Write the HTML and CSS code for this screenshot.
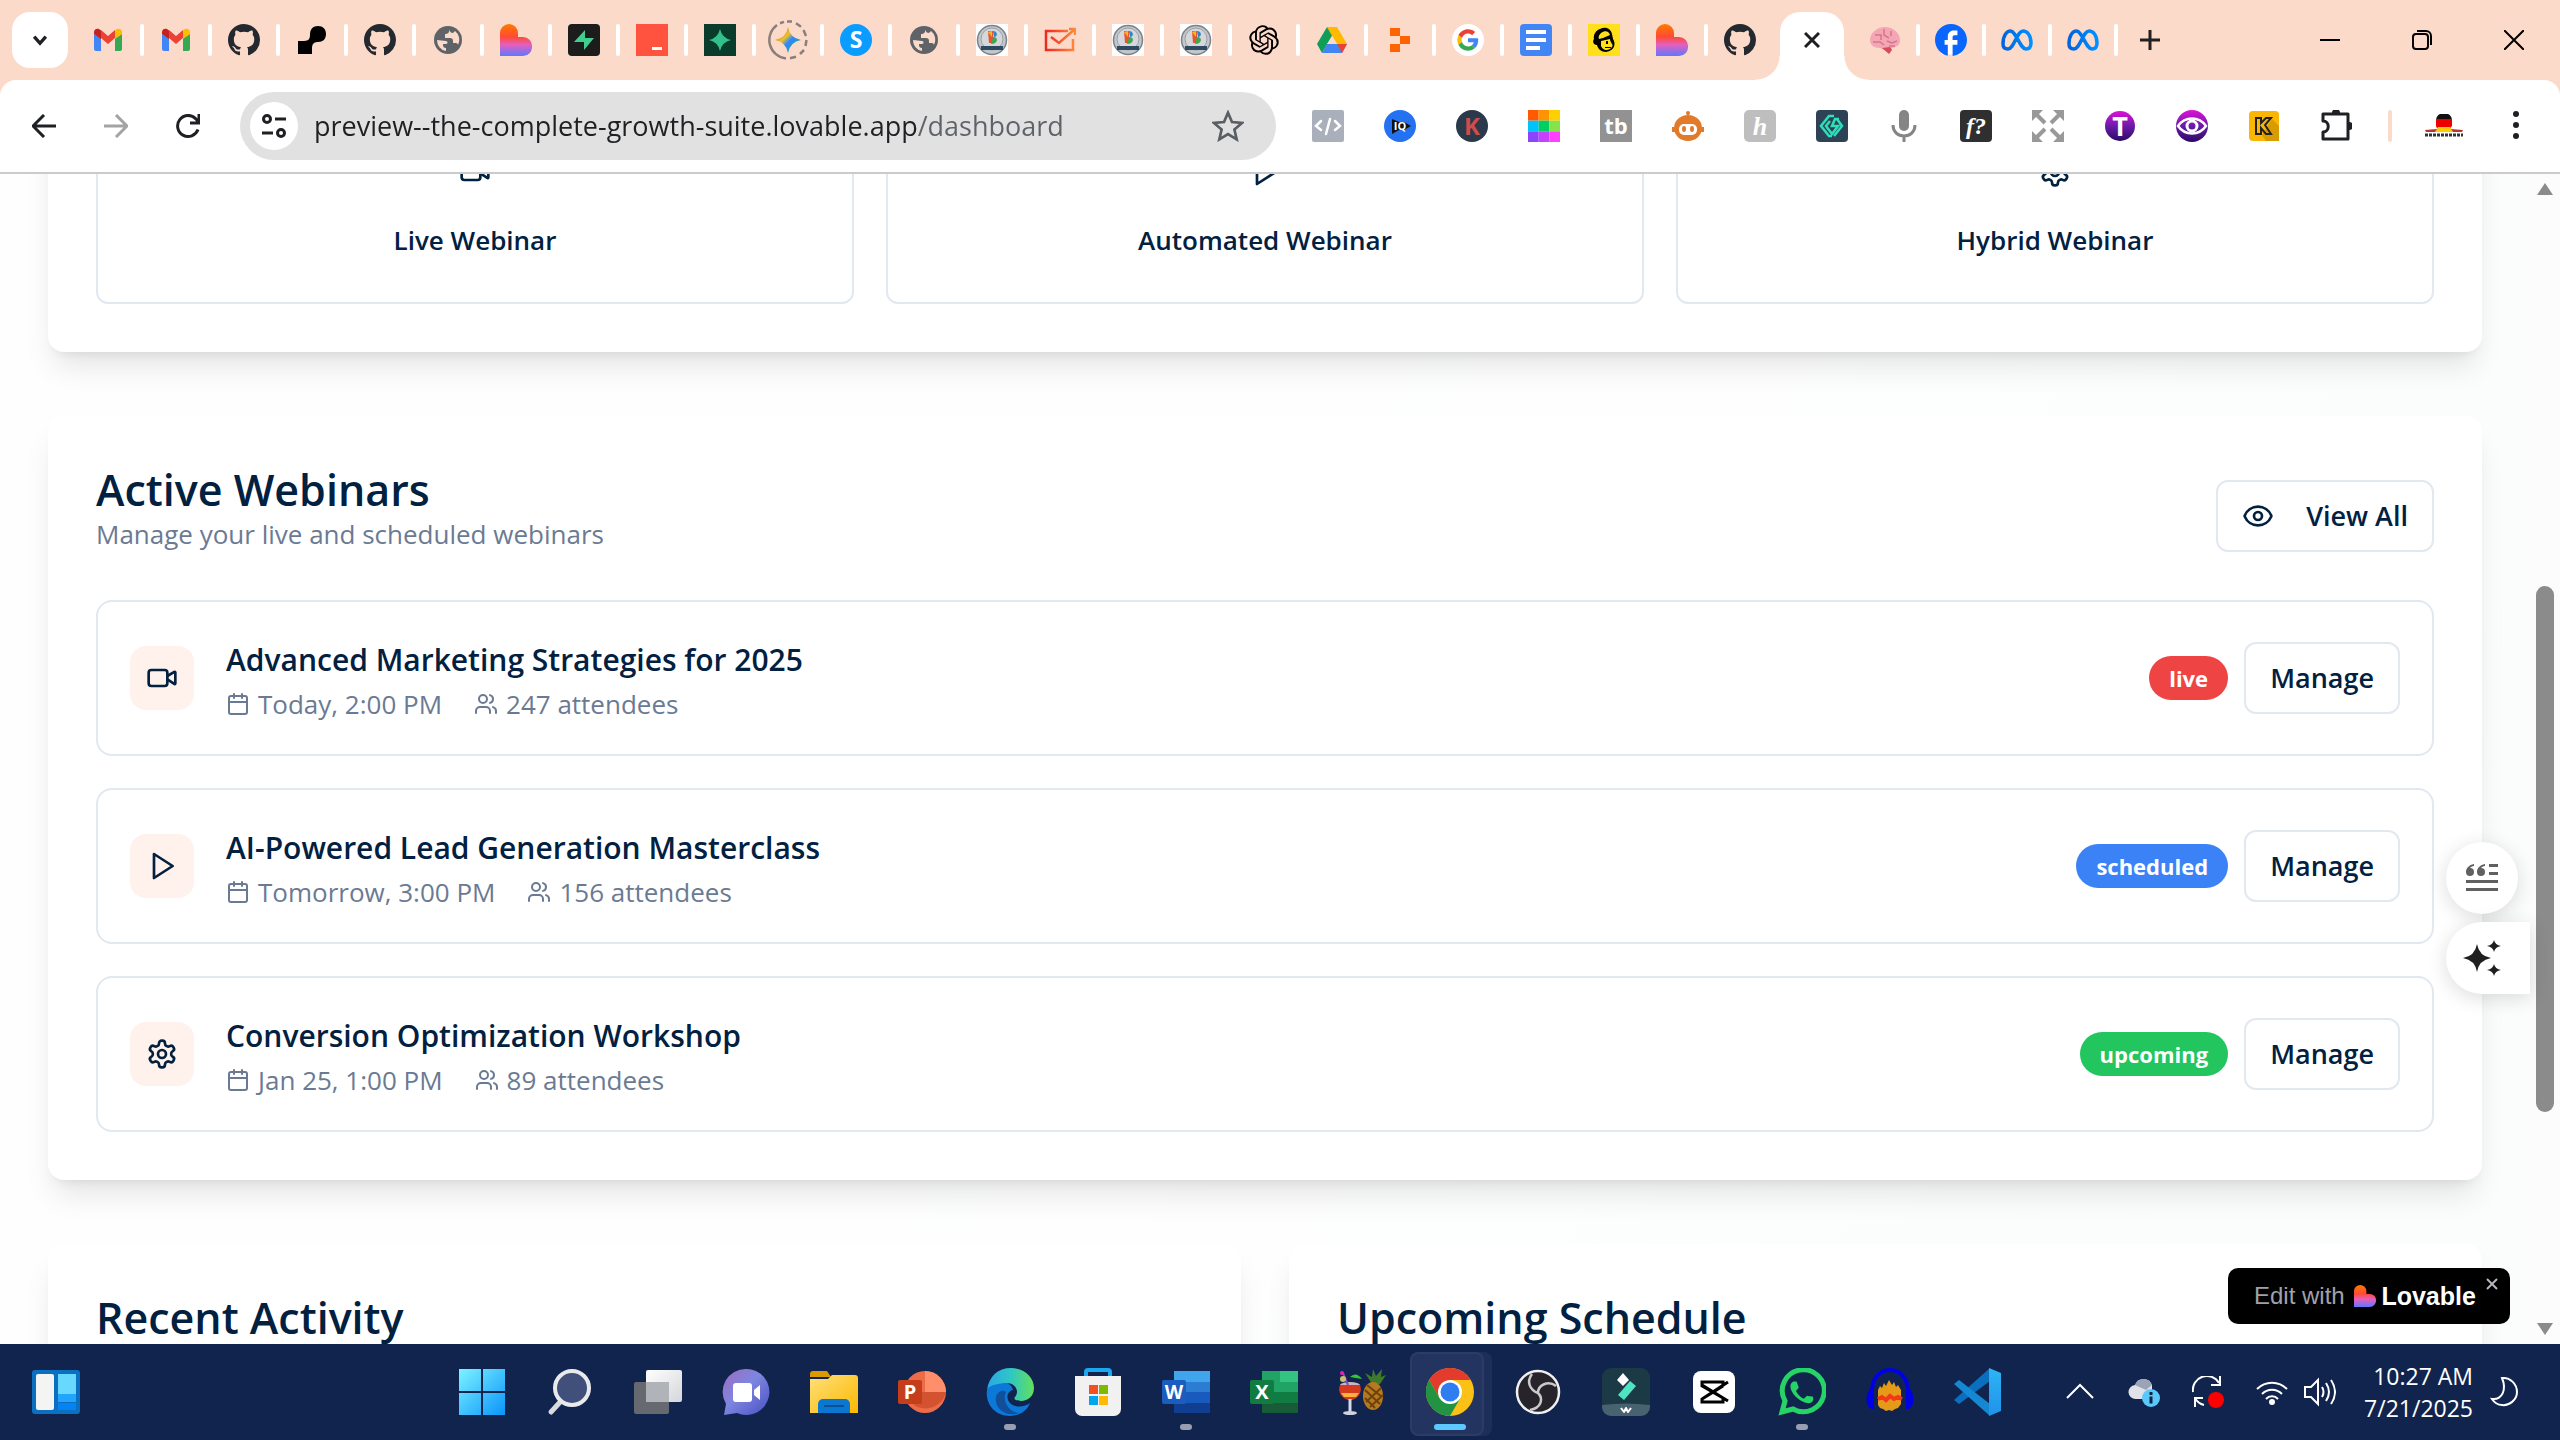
FILE: index.html
```html
<!DOCTYPE html>
<html lang="en">
<head>
<meta charset="utf-8">
<title>Dashboard</title>
<link rel="stylesheet" href="styles.css">
</head>
<body>
<svg class="defs" aria-hidden="true">
  <defs>
    <linearGradient id="g-heart" x1="0" y1="0" x2="0" y2="1"><stop offset="0" stop-color="#ff7a00"/><stop offset=".4" stop-color="#ff4a33"/><stop offset=".65" stop-color="#e45fc0"/><stop offset="1" stop-color="#5b78ff"/></linearGradient>
    <linearGradient id="g-spark" x1="0" y1="0" x2="1" y2="1"><stop offset="0" stop-color="#ff4641"/><stop offset=".4" stop-color="#e8c32a"/><stop offset=".55" stop-color="#3186ff"/><stop offset="1" stop-color="#0ebc5f"/></linearGradient>
    <linearGradient id="g-task" x1="0" y1="0" x2="1" y2="0"><stop offset="0" stop-color="#f0281e"/><stop offset="1" stop-color="#ff8a3c"/></linearGradient>
    <linearGradient id="g-violet" x1="0" y1="0" x2="0" y2="1"><stop offset="0" stop-color="#e010d8"/><stop offset=".5" stop-color="#6a1ca8"/><stop offset="1" stop-color="#2b0a66"/></linearGradient>
    <linearGradient id="g-meta" x1="0" y1="0" x2="1" y2="0"><stop offset="0" stop-color="#0064e0"/><stop offset="1" stop-color="#0090ff"/></linearGradient>
    <linearGradient id="g-win" x1="0" y1="0" x2="1" y2="1"><stop offset="0" stop-color="#7df3ff"/><stop offset="1" stop-color="#0a94fb"/></linearGradient>
    <linearGradient id="g-grey" x1="0" y1="0" x2="1" y2="1"><stop offset="0" stop-color="#ffffff"/><stop offset="1" stop-color="#d4d6da"/></linearGradient>
    <linearGradient id="g-chat" x1="0" y1="0" x2="1" y2="1"><stop offset="0" stop-color="#9c6bc0"/><stop offset=".45" stop-color="#7e86e0"/><stop offset="1" stop-color="#4a4fc4"/></linearGradient>
    <linearGradient id="g-folder" x1="0" y1="0" x2="1" y2="1"><stop offset="0" stop-color="#ffe07a"/><stop offset="1" stop-color="#fbb800"/></linearGradient>
    <linearGradient id="g-edge" x1="0" y1="0" x2="1" y2="0"><stop offset="0" stop-color="#2aa6e8"/><stop offset=".5" stop-color="#2fc6c4"/><stop offset="1" stop-color="#62e05c"/></linearGradient>
    <linearGradient id="g-code" x1="0" y1="0" x2="0" y2="1"><stop offset="0" stop-color="#2fb4f5"/><stop offset="1" stop-color="#1f92ea"/></linearGradient>

    <symbol id="gmail" viewBox="0 0 32 32"><path fill="#4285f4" d="M2 10v15a2 2 0 0 0 2 2h5V14z"/><path fill="#34a853" d="M30 10v15a2 2 0 0 1-2 2h-5V14z"/><path fill="#ea4335" d="M9 14V6l7 6 7-6v8l-7 6z"/><path fill="#c5221f" d="M2 10V8c0-3 3-4 5-3l2 1.500V15z"/><path fill="#fbbc04" d="M30 10V8c0-3-3-4-5-3l-2 1.500V15z"/></symbol>
    <symbol id="github" viewBox="0 0 16 16"><path fill="#24292f" d="M8 0C3.580 0 0 3.580 0 8c0 3.540 2.290 6.530 5.470 7.590.4.070.55-.17.55-.38 0-.19-.01-.82-.01-1.490-2.010.37-2.530-.49-2.690-.94-.09-.23-.48-.94-.82-1.130-.28-.15-.68-.52-.01-.53.63-.01 1.080.58 1.230.82.72 1.210 1.870.87 2.330.66.070-.52.28-.87.51-1.070-1.780-.2-3.640-.89-3.640-3.950 0-.87.31-1.590.82-2.150-.08-.2-.36-1.020.080-2.120 0 0 .67-.21 2.200.82.64-.18 1.320-.27 2-.27.68 0 1.360.090 2 .27 1.530-1.040 2.200-.82 2.200-.82.44 1.100.16 1.920.080 2.120.51.56.82 1.270.82 2.150 0 3.070-1.870 3.750-3.650 3.950.29.25.54.73.54 1.480 0 1.070-.01 1.930-.01 2.200 0 .21.15.46.55.38A8.010 8.010 0 0 0 16 8c0-4.420-3.580-8-8-8z"/></symbol>
    <symbol id="globe" viewBox="0 0 32 32"><circle cx="16" cy="16" r="14" fill="#5f6368"/><path fill="#fcdac9" d="M17 5c1 3-1 5-4 5v4h5c2 0 3 1 3 3v2h3c1 0 2 1 2 2a11 11 0 0 0-3-14l-2 2c-2 0-3-1-4-4zM5 16a11 11 0 0 0 9 11v-3c-2 0-3-1-3-3v-1h3c2 0 2-3 0-3z"/></symbol>
    <symbol id="heart" viewBox="0 0 32 32"><path fill="url(#g-heart)" d="M0 9a9 9 0 0 1 18 0v4h5a9 9 0 0 1 9 9.500 9 9 0 0 1-9 9.500H0z"/></symbol>
    <symbol id="badge-b" viewBox="0 0 32 32"><path fill="#fff" d="M0 0h32v32H0z"/><circle cx="16" cy="16" r="14.500" fill="#c3c7cb" stroke="#7b8289" stroke-width="1.500"/><circle cx="16" cy="15" r="11" fill="#d5d7da" stroke="#9aa0a6"/><path fill="#e9542f" d="M12 7h5v12h-4z"/><path fill="#2a86c9" d="M17 7c5 0 5 6 1 6z"/><path fill="#42a552" d="M17 13c6 0 5 7-2 7z"/><path fill="#f3b52b" d="M12 8l4-1v6z"/><path fill="#2c4a62" d="M5 22h22v4H5z"/></symbol>
    <symbol id="meta" viewBox="0 0 32 32"><path fill="none" stroke="url(#g-meta)" stroke-width="3.500" d="M2 20C2 11 6 7 9.500 7 15 7 19 25 25 25c3.500 0 5-2.500 5-6 0-8-4-12-8-12-6 0-9 18-15 18-3.500 0-5-2-5-5z"/></symbol>

    <symbol id="video" viewBox="0 0 24 24"><path d="m16 13 5.220 3.480a.5.5 0 0 0 .78-.42V7.870a.5.5 0 0 0-.75-.43L16 10.500"/><rect x="2" y="6" width="14" height="12" rx="2"/></symbol>
    <symbol id="play" viewBox="0 0 24 24"><path d="M6 3l14 9-14 9z"/></symbol>
    <symbol id="settings" viewBox="0 0 24 24"><path d="M12.220 2h-.44a2 2 0 0 0-2 2v.18a2 2 0 0 1-1 1.730l-.43.25a2 2 0 0 1-2 0l-.15-.08a2 2 0 0 0-2.730.73l-.22.38a2 2 0 0 0 .73 2.730l.15.1a2 2 0 0 1 1 1.720v.51a2 2 0 0 1-1 1.740l-.15.09a2 2 0 0 0-.73 2.730l.22.38a2 2 0 0 0 2.730.73l.15-.08a2 2 0 0 1 2 0l.43.25a2 2 0 0 1 1 1.730V20a2 2 0 0 0 2 2h.44a2 2 0 0 0 2-2v-.18a2 2 0 0 1 1-1.730l.43-.25a2 2 0 0 1 2 0l.15.08a2 2 0 0 0 2.730-.73l.22-.39a2 2 0 0 0-.73-2.730l-.15-.08a2 2 0 0 1-1-1.740v-.5a2 2 0 0 1 1-1.740l.15-.09a2 2 0 0 0 .73-2.730l-.22-.38a2 2 0 0 0-2.730-.73l-.15.08a2 2 0 0 1-2 0l-.43-.25a2 2 0 0 1-1-1.730V4a2 2 0 0 0-2-2z"/><circle cx="12" cy="12" r="3"/></symbol>
    <symbol id="eye" viewBox="0 0 24 24"><path d="M2.060 12.350a1 1 0 0 1 0-.7 10.750 10.750 0 0 1 19.880 0 1 1 0 0 1 0 .7 10.750 10.750 0 0 1-19.880 0"/><circle cx="12" cy="12" r="3"/></symbol>
    <symbol id="calendar" viewBox="0 0 24 24"><path d="M8 2v4M16 2v4M3 10h18"/><rect x="3" y="4" width="18" height="18" rx="2"/></symbol>
    <symbol id="users" viewBox="0 0 24 24"><path d="M16 21v-2a4 4 0 0 0-4-4H6a4 4 0 0 0-4 4v2M22 21v-2a4 4 0 0 0-3-3.870M16 3.130a4 4 0 0 1 0 7.750"/><circle cx="9" cy="7" r="4"/></symbol>
  </defs>
</svg>

<header class="browser">
  <div class="tabstrip">
    <button class="tab-search" aria-label="Search tabs"><svg viewBox="0 0 24 24"><path d="M5 8l7 8 7-8"/></svg></button>
    <div class="tabs">
      <span class="tab"><svg><use href="#gmail"/></svg></span>
      <span class="tab"><svg><use href="#gmail"/></svg></span>
      <span class="tab"><svg><use href="#github"/></svg></span>
      <span class="tab"><svg viewBox="0 0 32 32"><path d="M2 30V17h6c5 0 6-3 6-6 0-6 3-9 8-9s8 3 8 8-3 8-8 8c-4 0-6 2-6 6v6z"/></svg></span>
      <span class="tab"><svg><use href="#github"/></svg></span>
      <span class="tab"><svg><use href="#globe"/></svg></span>
      <span class="tab"><svg><use href="#heart"/></svg></span>
      <span class="tab"><svg viewBox="0 0 32 32"><rect width="32" height="32" rx="4" fill="#1c1c1c"/><path fill="#3ecf8e" d="M17 6v8h9L16 26v-8H6z"/></svg></span>
      <span class="tab"><svg viewBox="0 0 32 32"><path fill="#ff523f" d="M0 0h32v32H0z"/><path fill="#fff" d="M16 23h10v3H16z"/></svg></span>
      <span class="tab"><svg viewBox="0 0 32 32"><path fill="#093c2b" d="M0 0h32v32H0z"/><path fill="#34c08b" d="M16 5q2 9 11 11-9 2-11 11-2-9-11-11 9-2 11-11z"/></svg></span>
      <span class="tab tab-loading"><svg viewBox="0 0 40 40"><path fill="none" stroke="#8b7f7b" stroke-width="2.500" d="M18 38.400A18.500 18.500 0 0 1 9 5M12 3.300l4-1.400M19 1.500h5M28 3.300l5 3.500M35.500 10l2.500 6M38.500 20l-1 6M36 30l-4 4M28 36.700l-6 1.600"/><path fill="url(#g-spark)" d="M20 7q2 11 13 13-11 2-13 13-2-11-13-13 11-2 13-13z"/></svg></span>
      <span class="tab"><svg viewBox="0 0 32 32"><circle cx="16" cy="16" r="16" fill="#0a9dff"/><text x="16" y="24" class="t-icon t-white" font-size="23">S</text></svg></span>
      <span class="tab"><svg><use href="#globe"/></svg></span>
      <span class="tab"><svg><use href="#badge-b"/></svg></span>
      <span class="tab"><svg viewBox="0 0 32 32" fill="none" stroke="url(#g-task)" stroke-width="2.500"><path d="M24 7H2v19h27V15M7 13l8 6L31 5M25 5h6v6"/></svg></span>
      <span class="tab"><svg><use href="#badge-b"/></svg></span>
      <span class="tab"><svg><use href="#badge-b"/></svg></span>
      <span class="tab"><svg viewBox="-1 -1 26 26"><path d="M22.280 9.820a5.980 5.980 0 0 0-.52-4.910 6.050 6.050 0 0 0-6.500-2.900A6.070 6.070 0 0 0 4.980 4.180a5.980 5.980 0 0 0-4 2.900 6.050 6.050 0 0 0 .74 7.100 5.980 5.980 0 0 0 .51 4.910 6.050 6.050 0 0 0 6.520 2.900A5.980 5.980 0 0 0 13.260 24a6.060 6.060 0 0 0 5.770-4.210 5.990 5.990 0 0 0 4-2.900 6.060 6.060 0 0 0-.75-7.070zM13.260 22.430a4.480 4.480 0 0 1-2.880-1.040l.14-.08 4.780-2.760a.8.8 0 0 0 .39-.68v-6.740l2.020 1.170a.07.07 0 0 1 .04.05v5.580a4.500 4.500 0 0 1-4.490 4.500zM3.600 18.300a4.470 4.470 0 0 1-.54-3.010l.14.09 4.790 2.750a.77.77 0 0 0 .78 0l5.840-3.360v2.330a.08.08 0 0 1-.03.06L9.740 19.950A4.500 4.500 0 0 1 3.600 18.300zM2.340 7.900A4.490 4.490 0 0 1 4.710 5.920V11.600a.77.77 0 0 0 .38.680l5.820 3.350-2.020 1.170a.08.08 0 0 1-.07 0L3.990 14.010A4.500 4.500 0 0 1 2.340 7.870zM18.940 11.750L13.100 8.360 15.120 7.200a.08.08 0 0 1 .07 0l4.830 2.790a4.490 4.490 0 0 1-.68 8.100v-5.670a.79.79 0 0 0-.4-.67zM20.950 8.730l-.14-.09-4.780-2.780a.78.78 0 0 0-.78 0L9.410 9.230V6.900a.07.07 0 0 1 .03-.06l4.830-2.790a4.500 4.500 0 0 1 6.680 4.660zM8.310 12.860L6.290 11.700a.08.08 0 0 1-.04-.06V6.070a4.500 4.500 0 0 1 7.370-3.450l-.14.08L8.700 5.460a.8.8 0 0 0-.39.680zM9.400 10.500l2.610-1.500 2.600 1.500v3l-2.600 1.500-2.600-1.500z" fill-rule="evenodd"/></svg></span>
      <span class="tab"><svg viewBox="0 0 32 32"><path fill="#0f9d58" d="M11 3l5 9-10 17-5-9z"/><path fill="#188038" d="M11 3h10l-5 9z"/><path fill="#ffba00" d="M11 3h10l10 17H21z"/><path fill="#4285f4" d="M6 29l5-9h20l-5 9z"/><path fill="#ea4335" d="M21 20h10l-5 9z"/><path fill="#fcdac9" d="M16 12l5 8H11z"/></svg></span>
      <span class="tab"><svg viewBox="0 0 32 32" fill="#ff6200"><path d="M6 4h10v8H6zM16 12h10v8H16zM6 20h10v8H6z"/></svg></span>
      <span class="tab"><svg viewBox="-12 -12 72 72"><circle cx="24" cy="24" r="36" fill="#fff"/><path fill="#ea4335" d="M24 9.500c3.540 0 6.710 1.220 9.210 3.600l6.850-6.850C35.900 2.380 30.470 0 24 0 14.620 0 6.510 5.380 2.560 13.220l7.980 6.190C12.430 13.720 17.740 9.500 24 9.500z"/><path fill="#4285f4" d="M46.980 24.550c0-1.570-.15-3.090-.38-4.550H24v9.020h12.940c-.58 2.960-2.260 5.480-4.780 7.180l7.730 6c4.510-4.180 7.090-10.360 7.090-17.650z"/><path fill="#fbbc05" d="M10.530 28.590c-.48-1.450-.76-2.990-.76-4.590s.27-3.140.76-4.590l-7.980-6.190C.92 16.460 0 20.120 0 24c0 3.880.92 7.540 2.560 10.780z"/><path fill="#34a853" d="M24 48c6.480 0 11.930-2.130 15.890-5.810l-7.730-6c-2.150 1.450-4.920 2.300-8.160 2.300-6.260 0-11.570-4.220-13.470-9.910l-7.980 6.190C6.510 42.620 14.620 48 24 48z"/></svg></span>
      <span class="tab"><svg viewBox="0 0 32 32"><rect width="32" height="32" rx="4" fill="#4285f4"/><path fill="#fff" d="M6 6h20v4H6zM6 14h20v4H6zM6 22h14v4H6z"/></svg></span>
      <span class="tab"><svg viewBox="0 0 32 32"><path fill="#ffe01b" d="M0 0h32v32H0z"/><path d="M12 5c6-3 11 0 12 5l1 5c3 4 2 12-7 13-5 0-8-3-9-7-3 0-5-3-3-6-1-4 2-9 6-10z"/><path fill="#ffe01b" d="M13 9c4-3 8-2 9 2l-7 3-4 1c-1-2 0-4 2-6zM13 17l9-2c0 4 4 5 2 8-3 4-9 4-11-1z"/><path d="M18 17h2v3h-2zM17 23h6v1h-6z"/></svg></span>
      <span class="tab"><svg><use href="#heart"/></svg></span>
      <span class="tab"><svg><use href="#github"/></svg></span>
    </div>
    <button class="tab-active" aria-label="Close tab"><svg viewBox="0 0 16 16"><path d="M1 1l14 14M15 1L1 15"/></svg></button>
    <div class="tabs tabs-after">
      <span class="tab"><svg viewBox="0 0 32 32"><path fill="#f4a6b4" d="M16 3c8 0 15 6 15 13 0 5-3 7-8 8l-2 5-5-3-5-2C5 24 1 21 1 16 1 9 8 3 16 3z"/><path fill="none" stroke="#d9748a" stroke-width="1.500" d="M6 11h6v5M15 5v6l5 3M22 7v5M4 18h7l4 3M18 17l5 2 5-2M20 22h6"/><path fill="#d94a5e" d="M13 24l8-1 2 3-3 4z"/></svg></span>
      <span class="tab"><svg viewBox="2 2 20 20"><path fill="#fff" d="M6 5h12v16H6z"/><path fill="#0866ff" d="M22 12c0-5.520-4.480-10-10-10S2 6.480 2 12c0 4.840 3.440 8.870 8 9.800V15H8v-3h2V9.500C10 7.570 11.570 6 13.500 6H16v3h-2c-.55 0-1 .45-1 1v2h3v3h-3v6.950c5.050-.5 9-4.760 9-9.950z"/></svg></span>
      <span class="tab"><svg><use href="#meta"/></svg></span>
      <span class="tab"><svg><use href="#meta"/></svg></span>
    </div>
    <button class="tab-new" aria-label="New tab"><svg viewBox="0 0 20 20"><path d="M10 0v20M0 10h20"/></svg></button>
    <div class="window-controls">
      <button aria-label="Minimize"><svg viewBox="0 0 20 20"><path d="M0 10h20"/></svg></button>
      <button aria-label="Restore"><svg viewBox="0 0 20 20"><rect x="1" y="4" width="15" height="15" rx="3"/><path d="M5 1h9a5 5 0 0 1 5 5v9"/></svg></button>
      <button aria-label="Close"><svg viewBox="0 0 20 20"><path d="M0 0l20 20M20 0L0 20"/></svg></button>
    </div>
  </div>

  <div class="toolbar">
    <div class="nav-buttons">
      <button aria-label="Back"><svg viewBox="0 0 24 24"><path d="M24 12H2M12 1L1 12l11 11"/></svg></button>
      <button aria-label="Forward" disabled><svg viewBox="0 0 24 24"><path d="M0 12h22M12 1l11 11-11 11"/></svg></button>
      <button aria-label="Reload"><svg viewBox="0 0 24 24"><path d="M22 15.500A10.500 10.500 0 1 1 20 5l2.500 3.500M23 0v9h-9"/></svg></button>
    </div>
    <div class="omnibox">
      <button class="site-info" aria-label="Site information"><svg viewBox="0 0 24 24"><circle cx="5" cy="5" r="3.500"/><path d="M13 5h11M0 19h11"/><circle cx="19" cy="19" r="3.500"/></svg></button>
      <input class="url" type="text" aria-label="Address" value="preview--the-complete-growth-suite.lovable.app/dashboard">
      <button class="star" aria-label="Bookmark"><svg viewBox="0 0 24 24"><path d="M12 2l3 7 7.500.7-5.700 5 1.700 7.300L12 18l-6.500 4 1.700-7.300-5.700-5L9 9z"/></svg></button>
    </div>
    <div class="extensions">
      <span class="ext"><svg viewBox="0 0 32 32"><rect width="32" height="32" rx="2" fill="#aab0bb"/><path fill="none" stroke="#fff" stroke-width="2.500" stroke-linecap="round" d="M9 11l-5 5 5 4M23 11l5 5-5 4M18 9l-4 15"/></svg></span>
      <span class="ext"><svg viewBox="0 0 32 32"><circle cx="16" cy="16" r="16" fill="#2472f2"/><path fill="#111" d="M8 9l7 3h5l7 4-7 4h-5l-7 4z"/><text x="16" y="20" class="t-icon t-white" font-size="11">IQ</text></svg></span>
      <span class="ext"><svg viewBox="0 0 32 32"><circle cx="16" cy="16" r="16" fill="#2b3a4a"/><text x="16" y="25" class="t-icon" font-size="24" fill="#d24b4b">K</text></svg></span>
      <span class="ext"><svg viewBox="0 0 33 33"><path fill="#ff5a00" d="M0 0h11v11H0z"/><path fill="#ff9400" d="M11 0h11v11H11z"/><path fill="#ffd000" d="M22 0h11v11H22z"/><path fill="#00c2ff" d="M0 11h11v11H0z"/><path fill="#00cf62" d="M11 11h11v11H11z"/><path fill="#84e34a" d="M22 11h11v11H22z"/><path fill="#8a45ff" d="M0 22h11v11H0z"/><path fill="#c840ff" d="M11 22h11v11H11z"/><path fill="#ff40ff" d="M22 22h11v11H22z"/></svg></span>
      <span class="ext"><svg viewBox="0 0 32 32"><path fill="#929292" d="M0 0h32v32H0z"/><text x="16" y="24" class="t-icon t-white" font-size="22">tb</text></svg></span>
      <span class="ext"><svg viewBox="0 0 32 32"><g fill="#e17b2a"><circle cx="16" cy="3" r="2"/><path d="M15 3h2v6h-2z"/><ellipse cx="16" cy="18" rx="14" ry="13"/><path d="M0 17h4v5H0zM28 17h4v5h-4z"/></g><rect x="7" y="14" width="18" height="11" rx="5" fill="#fff"/><ellipse cx="12" cy="19" rx="2" ry="3" fill="#e17b2a"/><ellipse cx="20" cy="19" rx="2" ry="3" fill="#e17b2a"/></svg></span>
      <span class="ext"><svg viewBox="0 0 32 32"><rect width="32" height="32" rx="5" fill="#bebebe"/><text x="16" y="25" class="t-icon t-white t-script" font-size="26">h</text></svg></span>
      <span class="ext"><svg viewBox="0 0 32 32"><rect width="32" height="32" rx="4" fill="#2d4257"/><g fill="none" stroke="#2de0b8" stroke-width="2.500"><path d="M18 6h-5L5 16l8 10h3M18 26l8-10-5-7M14 11l-4 5 6 8 6-8h-6l3-7h4"/></g></svg></span>
      <span class="ext"><svg viewBox="0 0 32 32"><rect x="11" y="0" width="10" height="21" rx="5" fill="#858585"/><path fill="none" stroke="#858585" stroke-width="3" d="M5 15c0 7 5 11 11 11s11-4 11-11M16 26v6"/></svg></span>
      <span class="ext"><svg viewBox="0 0 32 32"><rect width="32" height="32" rx="4" fill="#2f2f2f"/><text x="16" y="24" class="t-icon t-white t-serif" font-size="24">f?</text></svg></span>
      <span class="ext"><svg viewBox="0 0 32 32"><g fill="#999" stroke="#999" stroke-width="4"><path stroke="none" d="M0 0h11L0 11zM32 0v11L21 0zM0 32V21l11 11zM32 32H21l11-11z"/><path d="M4 4l9 9M28 4l-9 9M4 28l9-9M28 28l-9-9"/></g></svg></span>
      <span class="ext"><svg viewBox="0 0 32 32"><circle cx="16" cy="16" r="15" fill="url(#g-violet)"/><text x="16" y="26" class="t-icon t-white" font-size="27">T</text></svg></span>
      <span class="ext"><svg viewBox="0 0 32 32"><circle cx="16" cy="16" r="16" fill="url(#g-violet)"/><path fill="none" stroke="#fff" stroke-width="2.500" d="M2 16c7-10 21-10 28 0-7 10-21 10-28 0z"/><circle cx="16" cy="16" r="5" fill="none" stroke="#fff" stroke-width="3"/></svg></span>
      <span class="ext"><svg viewBox="0 0 32 32"><rect x="1" y="1" width="30" height="30" rx="4" fill="#fbb604"/><path fill="#d99c00" d="M14 25l10-16 7 7v15H18z"/><path fill="none" stroke="#222" stroke-width="2" d="M8 8h5v5l5-5h5l-6 7 6 9h-5l-5-6v6H8z"/></svg></span>
      <button class="ext" aria-label="Extensions"><svg viewBox="0 0 32 32"><path fill="none" stroke="#1f2023" stroke-width="3" stroke-linejoin="round" d="M3 4h25v25H3v-7c7 0 7-11 0-11z"/><path fill="#1f2023" d="M12 3a4 4 0 0 1 8 0zM29 12a4 4 0 0 1 0 8z"/></svg></button>
      <i class="toolbar-divider"></i>
      <button class="profile" aria-label="Profile"><svg viewBox="0 0 40 24"><path fill="#111" d="M12 6a8 7 0 0 1 16 0z"/><path fill="#e00" d="M12 5h16v7q-2 3-4 3h-8q-4 0-4-4z"/><path fill="#fc0" d="M14 13h12l3 5H11z"/><path fill="#b33" d="M1 16l12-1-2 3H2zM39 16l-12-1 2 3h9z"/><path fill="none" stroke="#333" stroke-width="3" stroke-dasharray="3 1" d="M1 21h38"/></svg></button>
      <button class="menu" aria-label="Menu"><svg viewBox="0 0 8 32"><circle cx="4" cy="4" r="3"/><circle cx="4" cy="15" r="3"/><circle cx="4" cy="26" r="3"/></svg></button>
    </div>
  </div>
</header>

<div class="viewport">
  <main class="page">
    <section class="card types-card">
      <div class="types">
        <button class="type"><svg class="line-icon"><use href="#video"/></svg><span>Live Webinar</span></button>
        <button class="type"><svg class="line-icon"><use href="#play"/></svg><span>Automated Webinar</span></button>
        <button class="type"><svg class="line-icon"><use href="#settings"/></svg><span>Hybrid Webinar</span></button>
      </div>
    </section>

    <section class="card webinars-card">
      <header class="card-header">
        <div>
          <h2>Active Webinars</h2>
          <p>Manage your live and scheduled webinars</p>
        </div>
        <button class="btn btn-icon"><svg class="line-icon"><use href="#eye"/></svg>View All</button>
      </header>
      <ul class="webinars">
        <li class="webinar">
          <span class="webinar-icon"><svg class="line-icon"><use href="#video"/></svg></span>
          <div class="webinar-text">
            <h3>Advanced Marketing Strategies for 2025</h3>
            <p class="meta"><span><svg class="line-icon"><use href="#calendar"/></svg>Today, 2:00 PM</span><span><svg class="line-icon"><use href="#users"/></svg>247 attendees</span></p>
          </div>
          <span class="status status-live">live</span>
          <button class="btn">Manage</button>
        </li>
        <li class="webinar">
          <span class="webinar-icon"><svg class="line-icon"><use href="#play"/></svg></span>
          <div class="webinar-text">
            <h3>AI-Powered Lead Generation Masterclass</h3>
            <p class="meta"><span><svg class="line-icon"><use href="#calendar"/></svg>Tomorrow, 3:00 PM</span><span><svg class="line-icon"><use href="#users"/></svg>156 attendees</span></p>
          </div>
          <span class="status status-scheduled">scheduled</span>
          <button class="btn">Manage</button>
        </li>
        <li class="webinar">
          <span class="webinar-icon"><svg class="line-icon"><use href="#settings"/></svg></span>
          <div class="webinar-text">
            <h3>Conversion Optimization Workshop</h3>
            <p class="meta"><span><svg class="line-icon"><use href="#calendar"/></svg>Jan 25, 1:00 PM</span><span><svg class="line-icon"><use href="#users"/></svg>89 attendees</span></p>
          </div>
          <span class="status status-upcoming">upcoming</span>
          <button class="btn">Manage</button>
        </li>
      </ul>
    </section>

    <div class="split">
      <section class="card"><h2>Recent Activity</h2></section>
      <section class="card"><h2>Upcoming Schedule</h2></section>
    </div>
  </main>

  <div class="side-tools">
    <button class="quote-tool" aria-label="Quotes"><svg viewBox="0 0 32 32" fill="#606060"><path d="M8 2C3 3 0 6 0 10a4 4 0 1 0 4-4c1-1 2-2 4-2zM19 2c-5 1-8 4-8 8a4 4 0 1 0 4-4c1-1 2-2 4-2zM23 2h9v3h-9zM23 10h9v3h-9zM0 18h32v3H0zM0 26h32v3H0z"/></svg></button>
    <button class="spark-tool" aria-label="Assistant"><svg viewBox="0 0 38 38" fill="#1f1f1f"><path d="M14 5q2 12 14 14-12 2-14 14-2-12-14-14 12-2 14-14zM31 1q1 5 7 6-6 1-7 6-1-5-7-6 6-1 7-6zM31 25q1 5 7 6-6 1-7 6-1-5-7-6 6-1 7-6z"/></svg></button>
  </div>

  <div class="lovable-badge">
    <a href="#edit">Edit with <svg><use href="#heart"/></svg><b>Lovable</b></a>
    <button aria-label="Dismiss"><svg viewBox="0 0 12 12"><path d="M1 1l10 10M11 1L1 11"/></svg></button>
  </div>

  <div class="scrollbar">
    <svg viewBox="0 0 18 14"><path d="M9 1l8 12H1z"/></svg>
    <i class="thumb"></i>
    <svg viewBox="0 0 18 14"><path d="M9 13L1 1h16z"/></svg>
  </div>
</div>

<footer class="taskbar">
  <button class="task" aria-label="Widgets"><svg viewBox="0 0 48 48"><rect y="2" width="48" height="44" rx="3" fill="#0b6fc2"/><rect x="4" y="6" width="18" height="36" rx="2" fill="#f4f4f4"/><path fill="#69d8ff" d="M26 6h18v20H26z"/><path fill="#23a4ff" d="M26 26h18v8H26z"/><path fill="#0583f2" d="M26 35h18v7H26z"/></svg></button>
  <nav class="apps">
    <button class="task" aria-label="Start"><svg viewBox="0 0 48 48"><path fill="url(#g-win)" d="M1 1h22v22H1zM25 1h22v22H25zM1 25h22v22H1zM25 25h22v22H25z"/></svg></button>
    <button class="task" aria-label="Search"><svg viewBox="0 0 48 48"><path stroke="#d9dadd" stroke-width="5" stroke-linecap="round" d="M16 32L5 44"/><circle cx="26" cy="20" r="17" fill="#40507a" stroke="#e9eaec" stroke-width="4"/></svg></button>
    <button class="task" aria-label="Task view"><svg viewBox="0 0 48 48"><rect x="0" y="14" width="35" height="32" rx="2" fill="#666a70"/><rect x="12" y="2" width="36" height="32" rx="2" fill="url(#g-grey)"/><path fill="#b0b3b7" d="M12 14h23v20H12z"/></svg></button>
    <button class="task" aria-label="Chat"><svg viewBox="0 0 48 48"><path fill="url(#g-chat)" d="M24 1a23 23 0 1 1-9 44L2 47l2-11A23 23 0 0 1 24 1z"/><rect x="11" y="15" width="19" height="19" rx="3" fill="#fff"/><path fill="#fff" d="M32 22l6-5v15l-6-5z"/></svg></button>
    <button class="task" aria-label="File Explorer"><svg viewBox="0 0 48 48"><path fill="#dc9a00" d="M0 6a3 3 0 0 1 3-3h14l4 6H0z"/><path fill="url(#g-folder)" d="M0 11h18l4-4h23a3 3 0 0 1 3 3v35H0z"/><path fill="#0a78d0" d="M8 45V36a5 5 0 0 1 5-5h22a5 5 0 0 1 5 5v9z"/><path fill="#0a4f94" d="M14 37h20v2H14z"/></svg></button>
    <button class="task" aria-label="PowerPoint"><svg viewBox="0 0 48 48"><circle cx="27" cy="24" r="21" fill="#ed6c47"/><path fill="#ff8f6b" d="M27 3a21 21 0 0 1 21 21H27z"/><path fill="#d35230" d="M7 24h41a21 21 0 0 1-41 0z"/><rect y="12" width="24" height="24" rx="2" fill="#c43e1c"/><text x="12" y="31" class="t-icon t-white" font-size="20">P</text></svg></button>
    <button class="task has-window" aria-label="Edge"><svg viewBox="0 0 48 48"><path fill="#0c79d8" d="M1 22C5 12 24 10 27 22c-6 1-8 9-2 14 6 4 14 3 19-1-3 8-11 13-20 13C9 48-1 36 1 22z"/><path fill="#114f9b" d="M20 24c-4 8 2 21 14 21-14 5-26-5-24-16 1-5 7-8 10-5z"/><path fill="url(#g-edge)" d="M1 22C3 8 12 0 25 0c13 0 23 9 23 20 0 8-6 13-13 13-5 0-8-2-6-4 5-6 0-14-8-14S3 17 1 22z"/></svg></button>
    <button class="task" aria-label="Store"><svg viewBox="0 0 48 48"><path fill="none" stroke="#1ba8f0" stroke-width="4" d="M12 11V4a2 2 0 0 1 2-2h20a2 2 0 0 1 2 2v7"/><path fill="#f1f1f2" d="M1 8h46v33a7 7 0 0 1-7 7H8a7 7 0 0 1-7-7z"/><path fill="#f25022" d="M15 17h9v9h-9z"/><path fill="#7fba00" d="M25 17h9v9h-9z"/><path fill="#00a4ef" d="M15 28h9v9h-9z"/><path fill="#ffb900" d="M25 28h9v9h-9z"/></svg></button>
    <button class="task has-window" aria-label="Word"><svg viewBox="0 0 48 48"><path fill="#41a5ee" d="M12 3h36v11H12z"/><path fill="#2b7cd3" d="M12 14h36v10H12z"/><path fill="#185abd" d="M12 24h36v11H12z"/><path fill="#103f91" d="M12 35h36v10H12z"/><rect y="12" width="24" height="24" rx="2" fill="#1a5dbe"/><text x="12" y="31" class="t-icon t-white" font-size="19">W</text></svg></button>
    <button class="task" aria-label="Excel"><svg viewBox="0 0 48 48"><path fill="#21a366" d="M12 3h18v21H12z"/><path fill="#33c481" d="M30 3h18v11H30z"/><path fill="#21a366" d="M30 14h18v10H30z"/><path fill="#107c41" d="M12 24h36v11H12z"/><path fill="#185c37" d="M12 35h36v10H12z"/><rect y="12" width="24" height="24" rx="2" fill="#107c41"/><text x="12" y="31" class="t-icon t-white" font-size="20">X</text></svg></button>
    <button class="task" aria-label="Cocktail"><svg viewBox="0 0 48 48"><path fill="#3d7a2c" d="M34 16l-7-11 7 4 1-8 3 7 6-7-1 8 5-2-6 9z"/><ellipse cx="35" cy="28" rx="10" ry="14" fill="#b7791f"/><path stroke="#6d430b" stroke-width="2" fill="none" d="M27 22l15 14M29 17l15 12M43 20L28 34M45 27L32 39M27 30l10 10"/><ellipse cx="12" cy="17" rx="10" ry="3" fill="#c9b8c4"/><path fill="#d33a1e" d="M2 17h20c3 8-3 14-8 15h-4C5 31-1 25 2 17z"/><path fill="#ffb13b" d="M3 25h18l-3 4H6z"/><path stroke="#d6dbe6" stroke-width="3" fill="none" d="M12 31v13"/><ellipse cx="12" cy="45" rx="7" ry="2" fill="#cdd2de"/><path stroke="#7c4bc0" stroke-width="2" d="M5 5l5 12"/><circle cx="4" cy="5" r="2" fill="#e91ec0"/><circle cx="5" cy="11" r="3" fill="#c9c26a"/><path fill="#32c832" d="M12 9q6-6 12 2z"/></svg></button>
    <button class="task task-current" aria-label="Chrome"><svg viewBox="0 0 48 48"><circle cx="24" cy="24" r="24" fill="#fbc116"/><path fill="#e33b2e" d="M3.200 12A24 24 0 0 1 44.800 12H24L13.600 30z"/><path fill="#229342" d="M3.200 12A24 24 0 0 0 24 48l10.400-18H13.600z"/><circle cx="24" cy="24" r="12" fill="#fff"/><circle cx="24" cy="24" r="9.500" fill="#2f7df0"/></svg></button>
    <button class="task" aria-label="OBS"><svg viewBox="0 0 48 48"><circle cx="24" cy="24" r="21" fill="#26242a" stroke="#f0f0f0" stroke-width="2.500"/><path fill="none" stroke="#c9c9cc" stroke-width="2.500" d="M24 25C16 22 12 14 18 6M24 25c0-8 10-13 18-7M24 25c6 6 3 15-8 17"/></svg></button>
    <button class="task" aria-label="Filmora"><svg viewBox="0 0 48 48"><rect width="48" height="48" rx="9" fill="#1b3a46"/><path fill="#486270" d="M0 37q24-3 48 0v2a9 9 0 0 1-9 9H9a9 9 0 0 1-9-9z"/><path fill="#fff" d="M21 5l6 7-6 6-6-6z"/><path fill="#50e3c2" d="M28 13l6 5-12 14-6-5z"/><path fill="none" stroke="#fff" stroke-width="2" stroke-linejoin="round" d="M19 40l3 4 2-4 2 4 3-4"/></svg></button>
    <button class="task" aria-label="CapCut"><svg viewBox="0 0 48 48"><rect x="3" y="3" width="42" height="42" rx="8" fill="#fff"/><path fill="none" stroke="#000" stroke-width="3" d="M38 14L12 31v3h21v-4L12 18v-4h21v4M33 18L12 31M12 17l26 16"/></svg></button>
    <button class="task has-window" aria-label="WhatsApp"><svg viewBox="0 0 48 48"><path fill="none" stroke="#25d366" stroke-width="5" d="M4 44l3-11A21 21 0 1 1 15 41z"/><path fill="#25d366" transform="translate(10 10) scale(1.200)" d="M6.620 10.790c1.440 2.830 3.760 5.140 6.590 6.590l2.200-2.200c.27-.27.67-.36 1.020-.24l3.570.57c.55 0 1 .45 1 1V18c0 2-2 3-4 3C9 20 2 12 2 7c0-2 1.500-4 3-4h1.500c.55 0 1 .45 1 1l1.320 3.570c.11.35.03.74-.25 1.020z"/></svg></button>
    <button class="task" aria-label="Audacity"><svg viewBox="0 0 48 48"><path fill="none" stroke="#0000e6" stroke-width="4" d="M6 26C4-6 44-6 42 26"/><path fill="#0000e6" d="M8 19v22C-1 43-3 22 8 19zM40 19v22c9 2 11-19 0-22z"/><path fill="#e59a18" d="M12 22l2-4 2 2 2-5 2 3 3-6 3 5 2-3 2 5 2-2 3 5v14l-3 4-3 1-3 2-3-1-3 1-3-2-3-1-2-3z"/><path fill="none" stroke="#f5361b" stroke-width="4" d="M12 31l4-2 4 3 4-4 4 3 4-2 4 2"/></svg></button>
    <button class="task" aria-label="Visual Studio Code"><svg viewBox="0 0 48 48"><path fill="#0a6fbe" d="M0 32l36-32v13L5 36z"/><path fill="#1588d4" d="M0 16l5-4 31 24v12z"/><path fill="url(#g-code)" d="M35 0l12 5v38l-12 5z"/></svg></button>
  </nav>
  <div class="tray">
    <button aria-label="Show hidden icons"><svg viewBox="0 0 32 32"><path d="M3 22l13-13 13 13"/></svg></button>
    <button aria-label="OneDrive"><svg viewBox="0 0 32 32"><g stroke="none"><path fill="#dfe2e8" d="M8 23a7 7 0 0 1-1-14A9 9 0 0 1 24 9v14z"/><path fill="#9ba3b6" d="M7 9A9 9 0 0 1 24 9l-6 5z"/><circle cx="23" cy="22" r="9" fill="#5ac8fa"/><path fill="#0b2545" d="M21.500 16h3v3h-3zM21.500 20.500h3v7h-3z"/></g></svg></button>
    <button aria-label="Update"><svg viewBox="0 0 32 32"><path d="M1 16A14 14 0 0 1 27 7M28 0v9h-9M3 31v-9h8M3 22a14 14 0 0 0 9 7"/><circle cx="24" cy="24" r="8" fill="#f00" stroke="none"/></svg></button>
    <button class="quick" aria-label="Network and volume">
      <svg viewBox="0 0 32 32"><path d="M1 13a21 21 0 0 1 30 0M6 18a14 14 0 0 1 20 0M10 23a8 8 0 0 1 12 0"/><circle cx="16" cy="26" r="2" fill="#fff"/></svg>
      <svg viewBox="0 0 32 32"><path d="M1 11h6l7-7v24l-7-7H1zM18 11q3 5 0 10M22 7q6 9 0 18M27 4q8 12 0 24"/></svg>
    </button>
    <time class="clock"><span>10:27 AM</span><span>7/21/2025</span></time>
    <button aria-label="Focus"><svg viewBox="0 0 32 32"><path d="M13 2c8-1 15 6 15 14S20 30 13 29C8 29 5 26 3 23c10 1 15-9 10-21z"/></svg></button>
  </div>
</footer>
</body>
</html>
```
FILE: styles.css
```css
:root {
  --navy: #02203f;
  --muted: #6b7a93;
  --line: #e2e8f0;
  --strip: #fcdac9;
}

* { box-sizing: border-box; }

body {
  margin: 0;
  height: 100vh;
  display: flex;
  flex-direction: column;
  overflow: hidden;
  font-family: "Open Sans", "Noto Sans", sans-serif;
  color: var(--navy);
  background: #fff;
}

h2, h3, p, ul { margin: 0; padding: 0; }
ul { list-style: none; }
button { font: inherit; color: inherit; border: 0; padding: 0; background: none; }
svg { display: block; flex: none; }
.defs { position: absolute; width: 0; height: 0; }

.t-icon { font-family: "Open Sans", sans-serif; font-weight: 700; text-anchor: middle; }
.t-white { fill: #fff; }
.t-serif { font-family: "Liberation Serif", serif; font-style: italic; }
.t-script { font-family: "Liberation Serif", serif; font-style: italic; }

/* Browser chrome */
.browser { background: var(--strip); flex: none; }
.tabstrip { display: flex; height: 80px; padding-left: 12px; align-items: center; }
.tab-search {
  width: 56px; height: 56px; margin-right: 6px; border-radius: 18px; background: #fff;
  display: grid; place-items: center;
}
.tab-search svg { width: 20px; height: 20px; fill: none; stroke: #1f2023; stroke-width: 4; }
.tabs { display: flex; }
.tab { width: 68px; height: 32px; display: grid; place-items: center; position: relative; }
.tab svg { width: 32px; height: 32px; }
.tab-loading { height: 40px; margin: -4px 0; }
.tab-loading svg { width: 40px; height: 40px; }
.tab::after {
  content: ""; position: absolute; right: -2px; top: 0; width: 4px; height: 32px;
  border-radius: 2px; background: #fff;
}
.tab-loading::after { top: 4px; }
.tabs:not(.tabs-after) .tab:last-child::after { display: none; }
.tabs-after .tab { width: 66px; }
.tab-active {
  position: relative; align-self: flex-end; width: 64px; height: 68px; margin: 0 8px 0 6px;
  border-radius: 20px 20px 0 0; background: #fff; display: grid; place-items: center;
}
.tab-active::before, .tab-active::after {
  content: ""; position: absolute; bottom: 0; width: 24px; height: 24px;
}
.tab-active::before { right: 100%; background: radial-gradient(circle at 0 0, transparent 23px, #fff 24px); }
.tab-active::after { left: 100%; background: radial-gradient(circle at 100% 0, transparent 23px, #fff 24px); }
.tab-active svg { width: 16px; height: 16px; margin-bottom: 12px; stroke: #1f2023; stroke-width: 3; }
.tab-new { width: 68px; height: 56px; display: grid; place-items: center; }
.tab-new svg { width: 20px; height: 20px; stroke: #1f2023; stroke-width: 3; }
.window-controls { display: flex; margin-left: auto; }
.window-controls button { width: 92px; height: 80px; display: grid; place-items: center; }
.window-controls svg { width: 20px; height: 20px; fill: none; stroke: #000; stroke-width: 2; }

.toolbar {
  display: flex; align-items: center; height: 94px; background: #fff;
  border-bottom: 2px solid #cbcbcb; border-radius: 16px 16px 0 0;
}
.nav-buttons { display: flex; width: 240px; padding-left: 8px; }
.nav-buttons button { width: 72px; height: 48px; display: grid; place-items: center; }
.nav-buttons svg { width: 24px; height: 24px; fill: none; stroke: #1f2023; stroke-width: 3; }
.nav-buttons button:disabled svg { stroke: #a3a3a3; }
.omnibox {
  flex: 1; display: flex; align-items: center; height: 68px; padding: 0 32px 0 10px;
  border-radius: 34px; background: #e1e1e1;
}
.site-info { width: 48px; height: 48px; border-radius: 50%; background: #fff; display: grid; place-items: center; }
.site-info svg { width: 24px; height: 24px; fill: none; stroke: #1f2023; stroke-width: 3; }
.url {
  flex: 1; min-width: 0; margin-left: 16px; padding: 0; border: 0; outline: 0; height: 48px;
  font: 400 27px/48px "Open Sans", "Noto Sans", sans-serif;
  color: transparent;
  background: linear-gradient(90deg, #1f2023 604px, #5f6368 604px);
  -webkit-background-clip: text; background-clip: text;
}
.star svg { width: 32px; height: 32px; fill: none; stroke: #5a5d61; stroke-width: 2; }
.extensions { display: flex; align-items: center; padding: 0 24px 0 16px; }
.ext { width: 72px; height: 48px; display: grid; place-items: center; }
.ext svg { width: 32px; height: 32px; }
.toolbar-divider { width: 4px; height: 32px; margin-left: 16px; border-radius: 2px; background: var(--strip); }
.profile { width: 104px; height: 48px; display: grid; place-items: center; }
.profile svg { width: 40px; height: 24px; }
.menu { width: 40px; height: 48px; display: grid; place-items: center; }
.menu svg { width: 8px; height: 32px; fill: #1f2023; }

/* Page */
.viewport { position: relative; flex: 1; min-height: 0; display: flex; overflow: hidden; }
.page {
  flex: 1; min-width: 0; padding: 0 48px; overflow: hidden;
  background: linear-gradient(120deg, #fefefe, #fefefe 45%, #fafdfc);
}
.card {
  padding: 48px; border-radius: 16px; background: #fff;
  box-shadow: 0 20px 30px -6px rgba(0, 0, 0, .1), 0 8px 12px -8px rgba(0, 0, 0, .1);
}
.types-card { margin-top: -60px; padding-top: 0; }
.webinars-card, .split { margin-top: 64px; }
.types { display: grid; grid-template-columns: repeat(3, 1fr); gap: 32px; }
.type {
  height: 190px; display: flex; flex-direction: column; align-items: center; gap: 32px;
  padding: 40px 32px; border: 2px solid var(--line); border-radius: 12px;
  font-size: 26px; line-height: 40px; font-weight: 600;
}
.line-icon {
  width: 32px; height: 32px; fill: none; stroke: currentColor; stroke-width: 2;
  stroke-linecap: round; stroke-linejoin: round;
}
h2 { font-size: 43px; line-height: 52px; font-weight: 600; }
.card-header { display: flex; justify-content: space-between; align-items: flex-end; margin-bottom: 48px; }
.card-header p { font-size: 26px; line-height: 36px; color: var(--muted); }
.btn {
  height: 72px; padding: 0 24px; border: 2px solid var(--line); border-radius: 12px; background: #fff;
  font-size: 27px; line-height: 40px; font-weight: 600;
}
.btn-icon { display: flex; align-items: center; gap: 32px; }
.webinars { display: flex; flex-direction: column; gap: 32px; }
.webinar {
  display: flex; align-items: center; gap: 16px; padding: 32px;
  border: 2px solid var(--line); border-radius: 16px;
}
.webinar-icon {
  width: 64px; height: 64px; margin-right: 16px; border-radius: 16px; background: #fff1ec;
  display: grid; place-items: center;
}
.webinar-text { flex: 1; }
h3 { font-size: 30px; line-height: 52px; font-weight: 600; }
.meta { display: flex; gap: 32px; font-size: 26px; line-height: 36px; color: var(--muted); }
.meta span { display: flex; align-items: center; gap: 8px; }
.meta svg { width: 24px; height: 24px; }
.status {
  padding: 0 20px; border-radius: 22px; font-size: 22px; line-height: 44px; font-weight: 700; color: #fff;
}
.status-live { background: #ef4444; }
.status-scheduled { background: #3b82f6; }
.status-upcoming { background: #22c55e; }
.split { display: grid; grid-template-columns: 1fr 1fr; gap: 48px; }
.split .card { min-height: 400px; }

/* Overlays */
.side-tools {
  position: absolute; right: 30px; top: 668px; width: 84px;
  display: flex; flex-direction: column; gap: 8px;
}
.side-tools button { height: 72px; background: #fff; box-shadow: 0 4px 20px rgba(0, 0, 0, .14); display: flex; align-items: center; }
.quote-tool { width: 72px; border-radius: 50%; justify-content: center; }
.spark-tool { width: 84px; padding-left: 17px; border-radius: 36px 0 0 36px; }
.quote-tool svg { width: 32px; height: 32px; }
.spark-tool svg { width: 38px; height: 38px; }
.lovable-badge {
  position: absolute; right: 50px; bottom: 20px; width: 282px; height: 56px; padding-left: 26px;
  border-radius: 10px; background: #000; display: flex;
  font-family: "Liberation Sans", Arial, sans-serif;
}
.lovable-badge a { display: flex; align-items: center; color: #a1a1aa; font-size: 24px; text-decoration: none; white-space: pre; }
.lovable-badge a svg { width: 22px; height: 22px; margin: 0 5px 0 3px; }
.lovable-badge b { color: #fff; font-size: 25px; }
.lovable-badge button { align-self: flex-start; margin: 10px 12px 0 auto; }
.lovable-badge button svg { width: 12px; height: 12px; fill: none; stroke: #b5b5bb; stroke-width: 2; }

.scrollbar {
  width: 30px; padding: 8px 6px; background: #fcfcfc;
  display: flex; flex-direction: column; align-items: center;
}
.scrollbar svg { width: 18px; height: 14px; fill: #8b8b8b; }
.thumb { width: 18px; height: 526px; margin: 390px 0 auto; border-radius: 9px; background: #8b8b8b; }

/* Taskbar */
.taskbar { flex: none; height: 96px; display: flex; align-items: center; padding-left: 12px; color: #fff; background: #11244e; }
.apps { display: flex; margin-left: 338px; }
.task { position: relative; width: 88px; height: 80px; display: grid; place-items: center; }
.task svg { width: 48px; height: 48px; position: relative; }
.has-window::after, .task-current::after {
  content: ""; position: absolute; left: 50%; bottom: 2px; width: 12px; height: 6px;
  border-radius: 3px; background: #989eb1; transform: translateX(-50%);
}
.task-current::after { width: 32px; background: #5cc8ff; }
.task-current::before {
  content: ""; position: absolute; left: 4px; top: 0; width: 70px; height: 80px; border-radius: 8px;
  border: 2px solid #2c3c64; background: #233460; box-shadow: 8px 0 0 0 #1d2e59;
}
.tray { display: flex; align-items: center; margin-left: auto; padding-right: 23px; }
.tray button { width: 64px; height: 80px; display: grid; place-items: center; }
.tray svg { width: 32px; height: 32px; fill: none; stroke: #fff; stroke-width: 2; }
.tray .quick { width: 112px; display: flex; align-items: center; justify-content: center; gap: 16px; }
.clock { width: 121px; display: flex; flex-direction: column; text-align: right; font-size: 23px; line-height: 32px; }
```
